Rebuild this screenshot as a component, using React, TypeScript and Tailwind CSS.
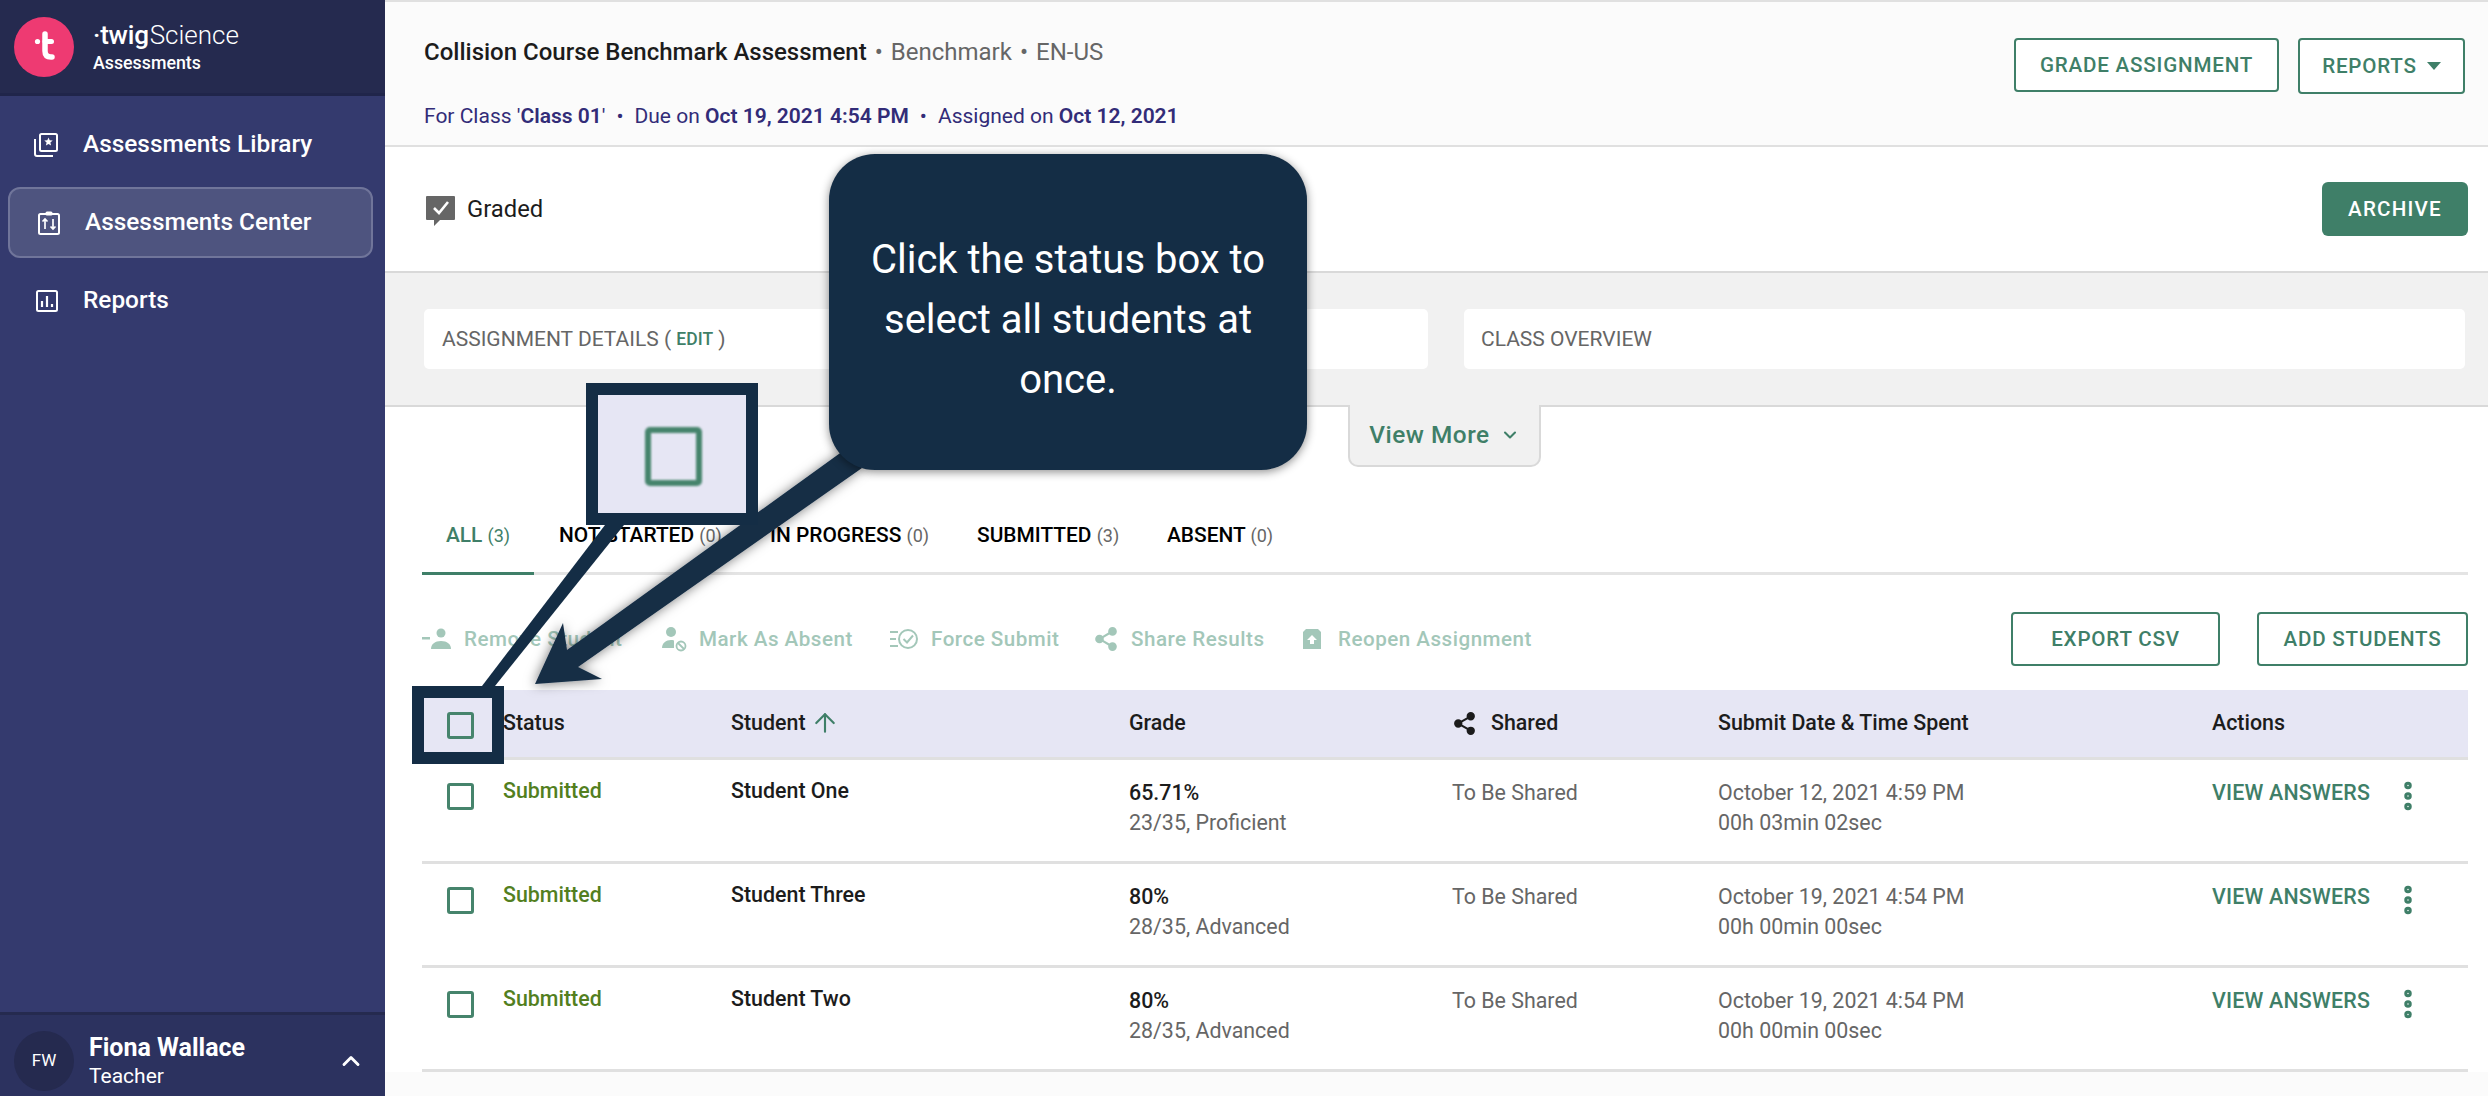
import { ArrowUp, ChevronDown, ChevronUp, EllipsisVertical, Share2 } from 'lucide-react'

type StudentRow = { name: string; percent: string; score: string; date: string; spent: string }

const STUDENTS: StudentRow[] = [
  { name: 'Student One', percent: '65.71%', score: '23/35, Proficient', date: 'October 12, 2021 4:59 PM', spent: '00h 03min 02sec' },
  { name: 'Student Three', percent: '80%', score: '28/35, Advanced', date: 'October 19, 2021 4:54 PM', spent: '00h 00min 00sec' },
  { name: 'Student Two', percent: '80%', score: '28/35, Advanced', date: 'October 19, 2021 4:54 PM', spent: '00h 00min 00sec' },
]

const TABS = [
  { label: 'NOT STARTED', count: 0, width: 'w-[211px]' },
  { label: 'IN PROGRESS', count: 0, width: 'w-[207px]' },
  { label: 'SUBMITTED', count: 3, width: 'w-[190px]' },
  { label: 'ABSENT', count: 0, width: 'w-[150px]' },
]

function Checkbox() {
  return <span className="block h-[27px] w-[27px] rounded-[3px] border-[3px] border-[#46846c]" />
}

function LibraryIcon() {
  return (
    <svg width="26" height="26" viewBox="0 0 26 26" fill="none" stroke="white" strokeWidth="2">
      <path d="M2 7v15a2 2 0 0 0 2 2h16" />
      <rect x="7" y="2" width="17" height="17" rx="1.5" />
      <path d="M15.5 5.5l1.2 2.8 3 .2-2.3 2 .7 3-2.6-1.6-2.6 1.6.7-3-2.3-2 3-.2z" fill="white" stroke="none" />
    </svg>
  )
}

function CenterIcon() {
  return (
    <svg width="24" height="26" viewBox="0 0 24 26" fill="none" stroke="white" strokeWidth="2">
      <rect x="2" y="4" width="20" height="20" rx="1.5" />
      <rect x="8.5" y="1.5" width="7" height="4" rx="1.5" fill="white" stroke="none" />
      <path d="M8 19V9M5.5 11.5L8 9l2.5 2.5M16 9v10M13.5 16.5L16 19l2.5-2.5" strokeWidth="1.7" />
    </svg>
  )
}

function ReportsIcon() {
  return (
    <svg width="24" height="24" viewBox="0 0 24 24" fill="none" stroke="white" strokeWidth="2">
      <rect x="2" y="2" width="20" height="20" rx="1.5" />
      <path d="M7 18v-6M12 18V7M17 18v-3" strokeWidth="2.2" />
    </svg>
  )
}

function Sidebar() {
  return (
    <aside className="flex h-full w-[385px] shrink-0 flex-col bg-[#343a6e] text-white">
      <div className="flex h-[96px] shrink-0 items-center gap-[19px] border-b-[3px] border-[#20254a] bg-[#252a4f] pl-[14px]">
        <svg width="60" height="60" viewBox="0 0 60 60">
          <circle cx="30" cy="30" r="30" fill="#ee3a72" />
          <path d="M31 17v17q0 6 6 6h1" fill="none" stroke="white" strokeWidth="5.5" strokeLinecap="round" />
          <path d="M31 24.5h6.5" stroke="white" strokeWidth="5" strokeLinecap="round" />
          <circle cx="23.5" cy="24.5" r="2.6" fill="white" />
        </svg>
        <div className="-mt-[2px] flex flex-col">
          <div className="flex h-[32px] items-baseline leading-[32px]">
            <span className="text-[26px] font-medium tracking-[-0.2px]">·twig</span>
            <span className="ml-[1px] text-[26px] font-light">Science</span>
          </div>
          <span className="mt-[2px] text-[17.8px] leading-[20px] font-medium">Assessments</span>
        </div>
      </div>
      <nav className="flex flex-col pt-[13px] text-[24.4px] font-medium">
        <div className="flex h-[71px] items-center gap-[24px] pl-[33px]">
          <LibraryIcon />
          <span>Assessments Library</span>
        </div>
        <div className="my-[7px] ml-[8px] mr-[12px] flex h-[71px] items-center gap-[24px] rounded-[12px] border-2 border-[#70759a] bg-[#4e547f] pl-[27px]">
          <CenterIcon />
          <span>Assessments Center</span>
        </div>
        <div className="flex h-[71px] items-center gap-[24px] pl-[35px]">
          <ReportsIcon />
          <span>Reports</span>
        </div>
      </nav>
      <div className="mt-auto flex h-[84px] shrink-0 items-center border-t-[3px] border-[#252a4f] bg-[#2c325f] pl-[14px] pt-[10px]">
        <span className="flex h-[60px] w-[60px] items-center justify-center rounded-full bg-[#252a4f] text-[17px]">FW</span>
        <div className="ml-[15px] mt-[2px] flex flex-col">
          <span className="text-[25px] leading-[30px] font-bold">Fiona Wallace</span>
          <span className="text-[21px] leading-[27px]">Teacher</span>
        </div>
        <ChevronUp className="ml-auto mr-[20px]" size={28} strokeWidth={2.5} />
      </div>
    </aside>
  )
}

function OutlineButton({ label, className }: { label: string; className: string }) {
  return (
    <button
      type="button"
      className={`flex items-center justify-center rounded-[4px] border-2 border-[#3f7f68] bg-white text-[20.6px] font-medium tracking-[0.8px] text-[#3f7f68] ${className}`}
    >
      {label}
    </button>
  )
}

function PageHeader() {
  return (
    <header className="flex h-[147px] shrink-0 justify-between border-y-2 border-[#e0e0e0] bg-[#fbfbfb] pl-[39px] pr-[23px]">
      <div>
        <div className="mt-[33px] h-[34px] text-[24px] leading-[34px] text-[#666]">
          <span className="font-medium text-[#1c1c1c]">Collision Course Benchmark Assessment</span>
          <span className="mx-[8px]">•</span>
          Benchmark
          <span className="mx-[8px]">•</span>
          EN-US
        </div>
        <div className="mt-[33px] text-[21px] leading-[28px] text-[#322c78]">
          For Class '<b className="font-semibold">Class 01</b>'
          <span className="mx-[11px]">•</span>
          Due on <b className="font-semibold">Oct 19, 2021 4:54 PM</b>
          <span className="mx-[11px]">•</span>
          Assigned on <b className="font-semibold">Oct 12, 2021</b>
        </div>
      </div>
      <div className="mt-[36px] flex items-start gap-[19px]">
        <OutlineButton label="GRADE ASSIGNMENT" className="h-[54px] w-[265px]" />
        <button
          type="button"
          className="flex h-[56px] w-[167px] items-center justify-center gap-[10px] rounded-[4px] border-2 border-[#3f7f68] bg-white text-[20.6px] font-medium tracking-[0.8px] text-[#3f7f68]"
        >
          REPORTS
          <span className="h-0 w-0 border-x-[7px] border-t-[8px] border-x-transparent border-t-[#3f7f68]" />
        </button>
      </div>
    </header>
  )
}

function GradedBar() {
  return (
    <div className="flex h-[124px] shrink-0 items-center justify-between pl-[40px] pr-[20px]">
      <div className="mt-[2px] flex items-center gap-[11px] text-[23.8px] text-[#1c1c1c]">
        <svg width="31" height="31" viewBox="0 0 31 31">
          <path d="M2 1h27a1 1 0 0 1 1 1v22a1 1 0 0 1-1 1H15l-6 6v-6H2a1 1 0 0 1-1-1V2a1 1 0 0 1 1-1z" fill="#666" />
          <path d="M9 13l5 5 9-11" fill="none" stroke="white" strokeWidth="2.6" />
        </svg>
        Graded
      </div>
      <button
        type="button"
        className="h-[54px] w-[146px] rounded-[6px] bg-[#3f7f68] text-[20.6px] font-medium tracking-[1.2px] text-white"
      >
        ARCHIVE
      </button>
    </div>
  )
}

function SummaryPanel() {
  return (
    <>
      <div className="flex h-[136px] shrink-0 items-center gap-[36px] border-y-2 border-[#d9d9d9] bg-[#f1f1f1] pl-[39px] pr-[23px]">
        <div className="flex h-[60px] w-[1004px] items-center rounded-[5px] bg-white pl-[18px] pt-[1px] text-[21px] text-[#666]">
          ASSIGNMENT DETAILS (&nbsp;<span className="text-[17.5px] font-medium text-[#3f7f68]">EDIT</span>&nbsp;)
        </div>
        <div className="flex h-[60px] w-[1001px] items-center rounded-[5px] bg-white pl-[17px] pt-[1px] text-[21px] text-[#666]">
          CLASS OVERVIEW
        </div>
      </div>
      <div className="-mt-[2px] flex justify-end pr-[947px]">
        <div className="flex h-[62px] w-[193px] items-center justify-center gap-[10px] rounded-b-[10px] border-x-2 border-b-2 border-[#d9d9d9] bg-[#f1f1f1] text-[24.4px] font-medium tracking-[0.5px] text-[#3f7f68]">
          View More
          <ChevronDown size={20} strokeWidth={2.5} />
        </div>
      </div>
    </>
  )
}

function Tabs() {
  return (
    <div className="mt-[39px] flex h-[69px] items-end border-b-[3px] border-[#e4e4e4] text-[20.9px] font-medium text-black">
      <div className="-mb-[3px] flex h-[69px] w-[112px] items-start justify-center border-b-[3px] border-[#3f7f68] pt-[14px] text-[#3f7f68]">
        <span>
          ALL <span className="text-[18px] font-normal">(3)</span>
        </span>
      </div>
      <div className="ml-[25px] flex self-start pt-[14px]">
        {TABS.map((tab) => (
          <span key={tab.label} className={tab.width}>
            {tab.label} <span className="text-[18px] font-normal text-[#666]">({tab.count})</span>
          </span>
        ))}
      </div>
    </div>
  )
}

function Toolbar() {
  return (
    <div className="flex h-[115px] items-center justify-between pt-[13px] text-[20.6px] font-medium tracking-[0.5px] text-[#a3c7b9]">
      <div className="flex items-center">
        <span className="flex w-[239px] items-center gap-[12px]">
          <svg width="30" height="24" viewBox="0 0 30 24" fill="#a3c7b9">
            <rect y="10" width="8" height="2.5" />
            <circle cx="19" cy="6" r="4.5" />
            <path d="M9 22c0-5 4-8 10-8s10 3 10 8z" />
          </svg>
          Remove Student
        </span>
        <span className="flex w-[228px] items-center gap-[12px]">
          <svg width="26" height="26" viewBox="0 0 26 26" fill="#a3c7b9">
            <circle cx="10" cy="6" r="5" />
            <path d="M1 22c0-5 4-8 9-8 1 0 2 0 3 .5V22z" />
            <circle cx="20" cy="20" r="4.5" fill="none" stroke="#a3c7b9" strokeWidth="1.8" />
            <path d="M17 17l6 6" stroke="#a3c7b9" strokeWidth="1.8" />
          </svg>
          Mark As Absent
        </span>
        <span className="flex w-[204px] items-center gap-[12px]">
          <svg width="30" height="24" viewBox="0 0 30 24" fill="none" stroke="#a3c7b9" strokeWidth="2">
            <path d="M1 5h8M1 12h6M1 19h8" />
            <circle cx="19" cy="12" r="9" />
            <path d="M14.5 12l3.5 3.5 6-7" />
          </svg>
          Force Submit
        </span>
        <span className="flex w-[207px] items-center gap-[12px]">
          <Share2 size={26} fill="#a3c7b9" strokeWidth={2} />
          Share Results
        </span>
        <span className="flex items-center gap-[14px]">
          <svg width="24" height="24" viewBox="0 0 24 24" fill="#a3c7b9">
            <path d="M3 5l3-3h12l3 3v17H3z" />
            <path d="M12 8l5 5h-3v4h-4v-4H7z" fill="white" />
          </svg>
          Reopen Assignment
        </span>
      </div>
      <div className="flex gap-[37px]">
        <OutlineButton label="EXPORT CSV" className="h-[54px] w-[209px]" />
        <OutlineButton label="ADD STUDENTS" className="h-[54px] w-[211px]" />
      </div>
    </div>
  )
}

const COLUMNS = 'grid grid-cols-[81px_228px_398px_323px_266px_494px_1fr]'

function StudentTable() {
  return (
    <div className="text-[21.4px]">
      <div className={`${COLUMNS} h-[70px] items-center border-b-[3px] border-[#e0e0e0] bg-[#e6e6f4] font-medium text-[#1c1c1c]`}>
        <span className="pl-[25px] pt-[4px]">
          <Checkbox />
        </span>
        <span>Status</span>
        <span className="flex items-center gap-[4px]">
          Student
          <ArrowUp size={30} strokeWidth={1.7} className="text-[#3f7f68]" />
        </span>
        <span>Grade</span>
        <span className="flex items-center gap-[14px]">
          <Share2 size={25} fill="#1c1c1c" strokeWidth={2} />
          Shared
        </span>
        <span>Submit Date &amp; Time Spent</span>
        <span>Actions</span>
      </div>
      {STUDENTS.map((student) => (
        <div key={student.name} className={`${COLUMNS} h-[104px] border-b-[3px] border-[#e0e0e0] leading-[30px]`}>
          <span className="pl-[25px] pt-[23px]">
            <Checkbox />
          </span>
          <span className="pt-[16px] font-medium text-[#537f1f]">Submitted</span>
          <span className="pt-[16px] font-medium text-[#1c1c1c]">{student.name}</span>
          <div className="pt-[18px] text-[#666]">
            <div className="font-medium text-[#1c1c1c]">{student.percent}</div>
            <div>{student.score}</div>
          </div>
          <span className="pt-[18px] text-[#666]">To Be Shared</span>
          <div className="pt-[18px] text-[#666]">
            <div>{student.date}</div>
            <div>{student.spent}</div>
          </div>
          <div className="flex items-start pt-[18px] font-medium tracking-[0.2px] text-[#3f7f68]">
            VIEW ANSWERS
            <EllipsisVertical className="ml-[20px]" size={36} strokeWidth={3} />
          </div>
        </div>
      ))}
    </div>
  )
}

// Tutorial overlay: the callout, its two pointers and the zoomed checkbox sit on top of the page.
function Callout() {
  return (
    <>
      <svg className="pointer-events-none absolute left-0 top-0" width="2488" height="1096" viewBox="0 0 2488 1096">
        <defs>
          <filter id="drop" x="-20%" y="-20%" width="140%" height="140%">
            <feDropShadow dx="-1" dy="1" stdDeviation="6" floodColor="#000" floodOpacity="0.5" />
          </filter>
        </defs>
        <polygon points="605,525 624,525 495,686 482,686" fill="#142d45" />
        <polygon
          points="843,451 862,468 578,667 602,679 535,684 563,623 567,650"
          fill="#142d45"
          filter="url(#drop)"
        />
      </svg>
      <div className="absolute left-[829px] top-[154px] flex h-[316px] w-[478px] items-center justify-center rounded-[46px] bg-[#142d45] px-[30px] pt-[15px] text-center text-[40px] leading-[60px] text-white shadow-[0_2px_10px_rgba(0,0,0,0.45)]">
        Click the status box to select all students at once.
      </div>
      <div className="absolute left-[586px] top-[383px] flex h-[142px] w-[172px] items-center justify-center border-[12px] border-[#142d45] bg-[#e6e6f4] pl-[3px] pt-[4px]">
        <span className="block h-[59px] w-[57px] rounded-[5px] border-[6px] border-[#46846c] blur-[1px]" />
      </div>
      <div className="absolute left-[412px] top-[686px] h-[78px] w-[92px] border-[12px] border-[#142d45]" />
    </>
  )
}

export default function App() {
  return (
    <div className="relative flex h-[1096px] w-[2488px] overflow-hidden bg-white font-['Roboto',sans-serif]">
      <Sidebar />
      <main className="flex min-w-0 flex-1 flex-col">
        <PageHeader />
        <GradedBar />
        <SummaryPanel />
        <div className="pl-[37px] pr-[20px]">
          <Tabs />
          <Toolbar />
          <StudentTable />
        </div>
        <div className="flex-1 bg-[#fbfbfb]" />
      </main>
      <Callout />
    </div>
  )
}
